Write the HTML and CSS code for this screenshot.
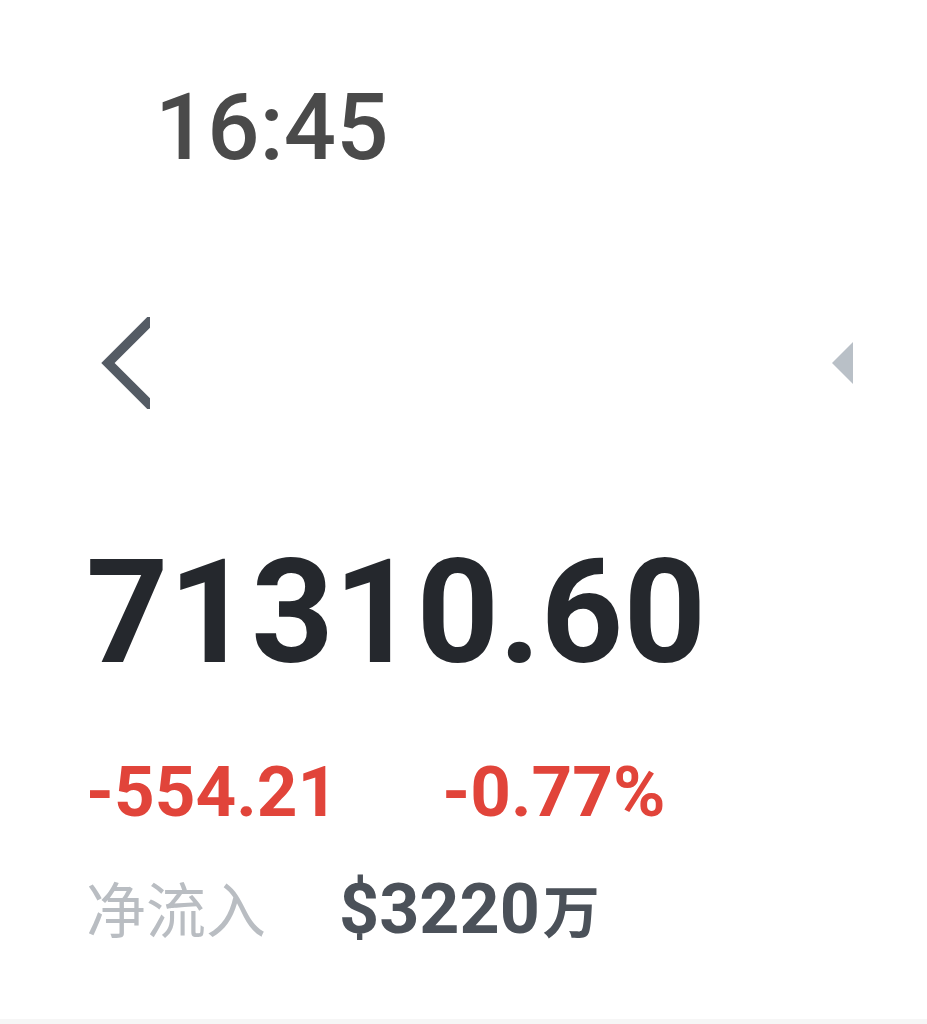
FILE: index.html
```html
<!DOCTYPE html>
<html lang="zh-CN">
<head>
  <meta charset="UTF-8" />
  <meta name="viewport" content="width=device-width, initial-scale=1" />
  <title>行情</title>
  <link rel="stylesheet" href="styles.css">
</head>
<body>
  <div class="screen">
    <div class="status-bar">
      <span class="clock">16:45</span>
    </div>

    <div class="nav-bar">
      <svg class="back-icon" width="50" height="92" viewBox="0 0 50 92">
        <polyline points="58,-4 8,46 58,96" fill="none" stroke="#545b64" stroke-width="9.5" />
      </svg>
      <svg class="prev-icon" width="24" height="44" viewBox="0 0 24 44">
        <polygon points="1,22 22,1 22,43" fill="#b9c0c7" />
      </svg>
    </div>

    <div class="quote">
      <div class="price">71310.60</div>

      <div class="change-row">
        <span class="change">-554.21</span>
        <span class="change">-0.77%</span>
      </div>

      <div class="flow-row">
        <span class="flow-label">净流入</span>
        <span class="flow-value">$3220<span class="unit">万</span></span>
      </div>
    </div>

    <div class="bottom-strip"></div>
  </div>
</body>
</html>
```

FILE: styles.css
```css
html, body {
  margin: 0;
  padding: 0;
  background: #ffffff;
}

body {
  font-family: Roboto, "Noto Sans CJK SC", sans-serif;
}

.screen {
  min-height: 1024px;
  display: flex;
  flex-direction: column;
}

/* status bar with the clock */
.status-bar {
  padding: 82px 0 0 155px;
  height: 120px;
  box-sizing: border-box;
}

.clock {
  font-size: 92px;
  font-weight: 500;
  line-height: 1;
  color: #4a4a4a;
  display: block;
}

/* back arrow left, small triangle right */
.nav-bar {
  display: flex;
  justify-content: space-between;
  align-items: center;
  padding: 197px 72px 0 100px;
}

.back-icon,
.prev-icon {
  display: block;
}

.quote {
  padding: 132px 0 0 86px;
}

.price {
  font-size: 144px;
  font-weight: bold;
  line-height: 1;
  color: #25282d;
}

.change-row {
  display: flex;
  gap: 104px;
  margin-top: 71px;
}

.change {
  font-size: 71px;
  font-weight: bold;
  line-height: 1;
  color: #e1443a;
}

.flow-row {
  display: flex;
  align-items: baseline;
  gap: 73px;
  margin-top: 47px;
  line-height: 1;
}

.flow-label {
  font-size: 60px;
  color: #b9bdc2;
}

.flow-value {
  font-size: 70px;
  font-weight: bold;
  color: #4b5159;
}

.unit {
  font-size: 57px;
  margin-left: 3px;
}

.bottom-strip {
  margin-top: auto;
  height: 5px;
  background: #f6f6f6;
}
```
